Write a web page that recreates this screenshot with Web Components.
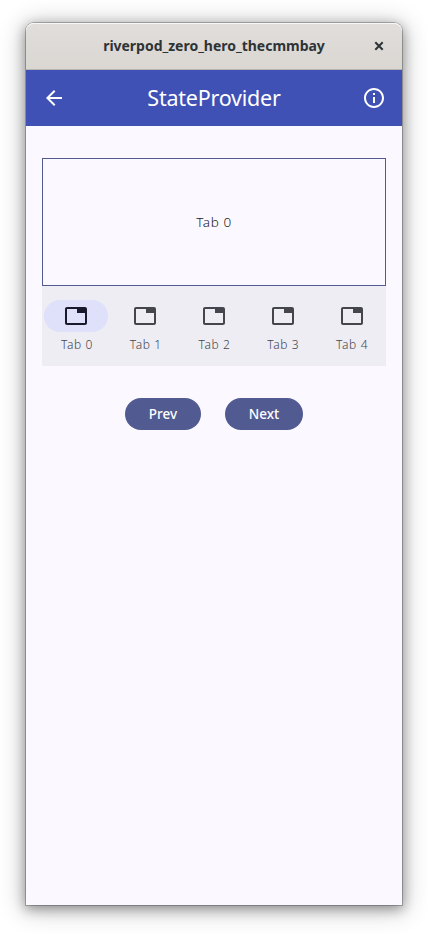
<!DOCTYPE html>
<html lang="en">
<head>
<meta charset="utf-8">
<title>riverpod_zero_hero_thecmmbay</title>
<style>
html, body { margin: 0; height: 100%; background: #fff; }
body { font-family: "Noto Sans", "Open Sans", sans-serif; overflow: hidden; }
</style>
</head>
<body>
<desktop-window label="riverpod_zero_hero_thecmmbay">
  <app-bar label="StateProvider"></app-bar>
  <tab-view>
    <span>Tab 0</span>
    <nav-tab slot="tabs" selected>Tab 0</nav-tab>
    <nav-tab slot="tabs">Tab 1</nav-tab>
    <nav-tab slot="tabs">Tab 2</nav-tab>
    <nav-tab slot="tabs">Tab 3</nav-tab>
    <nav-tab slot="tabs">Tab 4</nav-tab>
  </tab-view>
  <button-row>
    <pill-button style="--w:76px">Prev</pill-button>
    <pill-button style="--w:78px">Next</pill-button>
  </button-row>
</desktop-window>
<script>
function define(name, markup) {
  customElements.define(name, class extends HTMLElement {
    constructor() {
      super();
      this.attachShadow({ mode: 'open' }).innerHTML = markup;
    }
    connectedCallback() {
      const label = this.shadowRoot.querySelector('.label');
      if (label) label.textContent = this.getAttribute('label');
    }
  });
}

define('desktop-window', `
<style>
:host { display: block; padding: 23px 26px 29px; height: 934px; box-sizing: border-box; }
.frame { height: 882px; border-radius: 8px 8px 0 0; background: #fbf8ff;
  box-shadow: 0 0 0 1px rgba(0,0,0,.23), 0 3px 12px 1px rgba(0,0,0,.32), 0 3px 24px 3px rgba(0,0,0,.24); }
header { height: 47px; box-sizing: border-box; display: grid; grid-template-columns: 46px 1fr 46px; align-items: center;
  border-bottom: 1px solid #b8b3ae; border-radius: 8px 8px 0 0; box-shadow: inset 0 1px #f8f7f6;
  background: linear-gradient(#e1dedb, #dad6d2); }
.label { grid-column: 2; text-align: center; font-weight: 700; font-size: 14px; line-height: 20px; color: #2e3436; letter-spacing: -.02px; white-space: nowrap; }
svg { display: block; justify-self: center; }
</style>
<div class="frame">
  <header><span class="label"></span>
    <svg width="16" height="16" viewBox="0 0 16 16"><path d="M4.3 4.3l7.4 7.4M11.7 4.3l-7.4 7.4" stroke="#2e3436" stroke-width="2" fill="none"/></svg>
  </header>
  <slot></slot>
</div>`);

define('app-bar', `
<style>
:host { display: grid; grid-template-columns: 56px 1fr 56px; align-items: center; justify-items: center; height: 56px; background: #3f51b5; color: #fff; }
.label { font-size: 21.5px; line-height: 28px; letter-spacing: -.22px; }
svg { display: block; fill: currentColor; }
</style>
<svg width="24" height="24" viewBox="0 0 24 24"><path d="M20 11H7.83l5.59-5.59L12 4l-8 8 8 8 1.41-1.41L7.83 13H20v-2z"/></svg>
<span class="label"></span>
<svg width="24" height="24" viewBox="0 0 24 24"><path d="M11 7h2v2h-2zm0 4h2v6h-2zm1-9C6.48 2 2 6.48 2 12s4.48 10 10 10 10-4.48 10-10S17.52 2 12 2zm0 18c-4.41 0-8-3.59-8-8s3.59-8 8-8 8 3.59 8 8-3.59 8-8 8z"/></svg>`);

define('tab-view', `
<style>
:host { display: block; margin: 32px 16px 0; }
.panel { height: 128px; box-sizing: border-box; border: 1px solid #515b92; display: grid; place-items: center;
  font-size: 13.5px; font-weight: 350; line-height: 20px; letter-spacing: .6px; padding-bottom: 1px; color: #1b1b21; }
nav { display: grid; grid-template-columns: repeat(5, 1fr); height: 80px; background: #eeedf3; }
</style>
<div class="panel"><slot></slot></div>
<nav><slot name="tabs"></slot></nav>`);

define('nav-tab', `
<style>
:host { display: flex; flex-direction: column; align-items: center; padding-top: 14px; gap: 5px; color: #46464f; min-width: 0; }
.pill { width: 64px; height: 32px; border-radius: 16px; display: grid; place-items: center; color: #45464d; }
:host([selected]) .pill { background: #dfe0f9; color: #181a2c; }
.text { font-size: 12px; line-height: 16px; letter-spacing: .6px; font-weight: 350; padding-left: 1px; }
svg { display: block; fill: currentColor; }
</style>
<div class="pill"><svg width="24" height="24" viewBox="0 0 24 24"><path d="M21 3H3c-1.1 0-2 .9-2 2v14c0 1.1.9 2 2 2h18c1.1 0 2-.9 2-2V5c0-1.1-.9-2-2-2zm0 16H3V5h10v4h8v10z"/></svg></div>
<span class="text"><slot></slot></span>`);

define('button-row', `
<style>:host { display: flex; justify-content: center; gap: 24px; margin-top: 32px; }</style>
<slot></slot>`);

define('pill-button', `
<style>
:host { display: block; }
button { display: block; width: var(--w); height: 32px; border: 0; padding: 0; border-radius: 16px; background: #515b92; color: #fff;
  font: 500 13.5px/20px "Noto Sans", "Open Sans", sans-serif; letter-spacing: 0; }
</style>
<button><slot></slot></button>`);
</script>
</body>
</html>
